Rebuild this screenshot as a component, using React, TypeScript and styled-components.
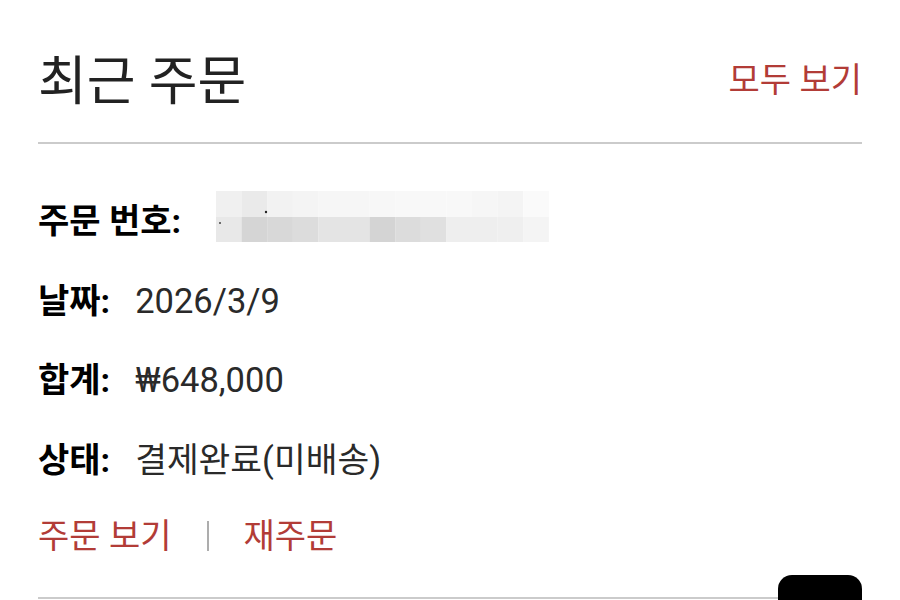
import React from "react";
import styled, { createGlobalStyle } from "styled-components";

const Global = createGlobalStyle`
  html, body { margin: 0; padding: 0; background: #fff; }
  body { font-family: Roboto, "Noto Sans CJK KR", sans-serif; overflow: hidden; }
`;

const Page = styled.div`
  width: 900px;
  height: 600px;
  box-sizing: border-box;
  padding: 0 38px;
  overflow: hidden;
  position: relative;
`;

const Header = styled.div`
  display: flex;
  justify-content: space-between;
  align-items: center;
  padding-top: 42px;
  padding-bottom: 19px;
  border-bottom: 2px solid #cbcbcb;
`;

const Title = styled.h2`
  margin: 0;
  font-size: 53px;
  font-weight: 400;
  color: #222;
  line-height: 81px;
`;

const RedLink = styled.a<{ $size?: number }>`
  color: #b23c37;
  font-size: ${(p) => p.$size ?? 34}px;
  line-height: 50px;
  text-decoration: none;
  cursor: pointer;
`;

const HeaderLink = styled(RedLink)`
  margin-bottom: 5px;
`;

const Details = styled.div`
  display: flex;
  flex-direction: column;
  gap: 29.5px;
  padding-top: 52px;
`;

const Row = styled.div`
  display: flex;
  align-items: center;
  height: 50px;
  font-size: 34.5px;
  line-height: 50px;
  color: #2a2a2a;
`;

const Label = styled.strong`
  font-weight: 700;
  font-size: 34px;
  color: #000;
  margin-right: 25px;
`;

const Actions = styled.div`
  display: flex;
  align-items: center;
  gap: 35px;
  height: 50px;
  margin-top: -3px;
`;

const Sep = styled.span`
  width: 2px;
  height: 30px;
  background: #adadad;
`;

const Footer = styled.div`
  margin-top: 36px;
  border-top: 2px solid #cbcbcb;
`;

const DarkButton = styled.div`
  position: absolute;
  right: 38px;
  top: 575px;
  width: 84px;
  height: 60px;
  background: #000;
  border-radius: 14px;
`;

const MosaicBox = styled.svg`
  display: block;
  margin: -8px 0 0 10px;
  flex-shrink: 0;
`;

const bottom = [0xe8, 0xd5, 0xd8, 0xdc, 0xe4, 0xe4, 0xd4, 0xdc, 0xe0, 0xee, 0xee, 0xef, 0xf4];
const top = [0xf0, 0xea, 0xf2, 0xf4, 0xf6, 0xf6, 0xf7, 0xf8, 0xf8, 0xf8, 0xf6, 0xf4, 0xfa];
const hex = (v: number) => `#${v.toString(16).repeat(3)}`;

const Mosaic = () => (
  <MosaicBox width="334" height="52" viewBox="0 0 334 52">
    {top.map((v, i) => (
      <rect key={"t" + i} x={i * 25.6} y={0} width={25.7} height={26} fill={hex(v)} />
    ))}
    {bottom.map((v, i) => (
      <rect key={"b" + i} x={i * 25.6} y={26} width={25.7} height={25} fill={hex(v)} />
    ))}
    <circle cx={50} cy={21} r={1.2} fill="#222" />
    <circle cx={4} cy={32} r={1} fill="#444" />
  </MosaicBox>
);

export default function App() {
  return (
    <Page>
      <Global />
      <Header>
        <Title>최근 주문</Title>
        <HeaderLink>모두 보기</HeaderLink>
      </Header>
      <Details>
        <Row>
          <Label>주문 번호:</Label>
          <Mosaic />
        </Row>
        <Row>
          <Label>날짜:</Label>
          2026/3/9
        </Row>
        <Row>
          <Label>합계:</Label>
          ₩648,000
        </Row>
        <Row>
          <Label>상태:</Label>
          결제완료(미배송)
        </Row>
        <Actions>
          <RedLink>주문 보기</RedLink>
          <Sep />
          <RedLink>재주문</RedLink>
        </Actions>
      </Details>
      <Footer />
      <DarkButton />
    </Page>
  );
}
